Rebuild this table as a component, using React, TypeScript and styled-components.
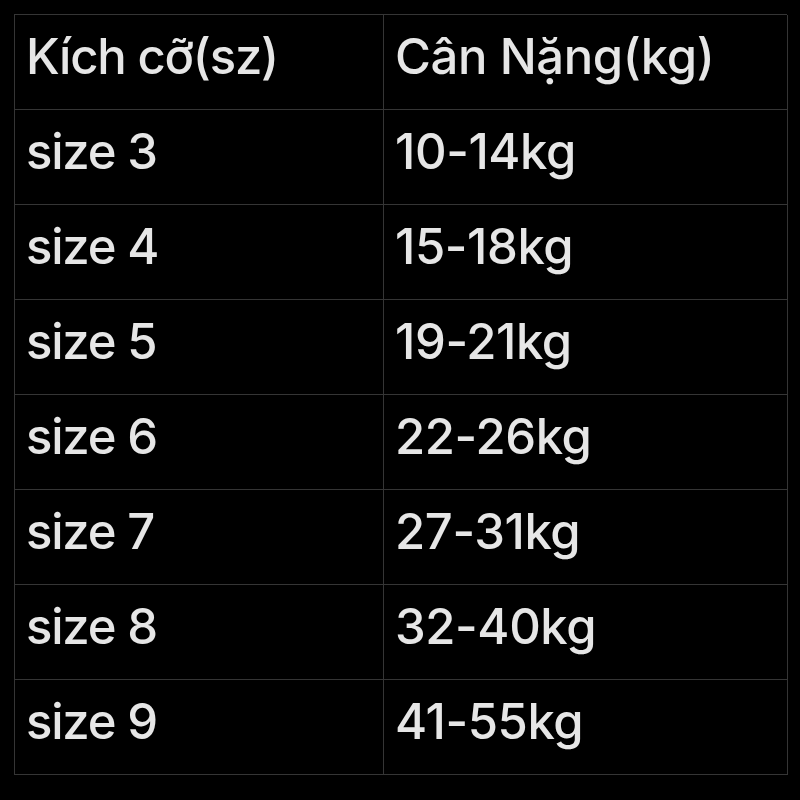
import React from "react";
import styled, { createGlobalStyle } from "styled-components";

const Global = createGlobalStyle`
  html, body {
    margin: 0;
    padding: 0;
    background: #000;
  }
  body {
    font-family: Inter, "Noto Sans", "Liberation Sans", sans-serif;
  }
`;

const Page = styled.div`
  width: 800px;
  height: 800px;
  background: #000;
  padding: 14px 0 0 14px;
  box-sizing: border-box;
`;

const Table = styled.div`
  display: grid;
  grid-template-columns: 369px 404px;
  grid-auto-rows: 95px;
  width: 773px;
  border-top: 1px solid #353535;
  border-left: 1px solid #353535;
  box-sizing: border-box;
`;

const Cell = styled.div<{ $numeric?: boolean }>`
  display: flex;
  align-items: center;
  padding: 0 0 11px 11px;
  border-right: 1px solid #353535;
  border-bottom: 1px solid #353535;
  color: #e6e6e6;
  font-size: 49px;
  font-weight: 500;
  letter-spacing: ${(p) => (p.$numeric ? "-0.4px" : "-1.2px")};
  white-space: nowrap;
  box-sizing: border-box;
`;

const rows: [string, string][] = [
  ["Kích cỡ(sz)", "Cân Nặng(kg)"],
  ["size 3", "10-14kg"],
  ["size 4", "15-18kg"],
  ["size 5", "19-21kg"],
  ["size 6", "22-26kg"],
  ["size 7", "27-31kg"],
  ["size 8", "32-40kg"],
  ["size 9", "41-55kg"],
];

export default function App() {
  return (
    <>
      <Global />
      <Page>
        <Table>
          {rows.map(([a, b], i) => (
            <React.Fragment key={i}>
              <Cell>{a}</Cell>
              <Cell $numeric>{b}</Cell>
            </React.Fragment>
          ))}
        </Table>
      </Page>
    </>
  );
}
